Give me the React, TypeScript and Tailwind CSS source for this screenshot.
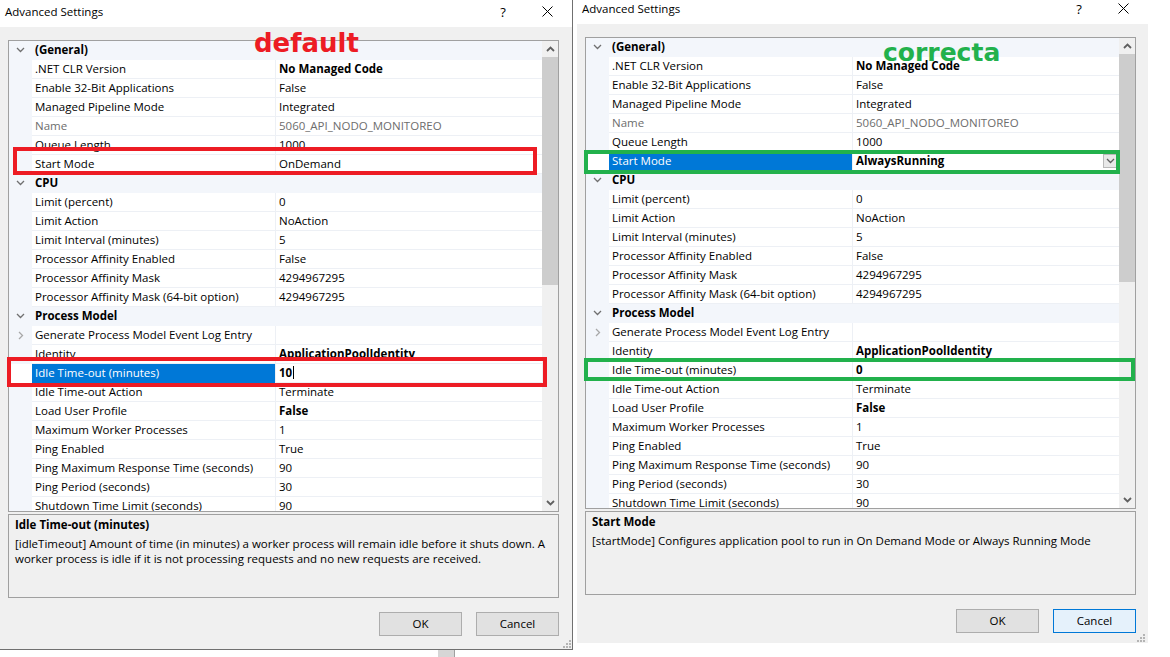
import React from 'react'

type Prop = {
  label: string
  value?: string
  cat?: boolean
  bold?: boolean
  disabled?: boolean
  expand?: boolean
  selected?: boolean
  editing?: boolean
  dropdown?: boolean
}

function buildRows(fixed: boolean): Prop[] {
  return [
    { label: '(General)', cat: true },
    { label: '.NET CLR Version', value: 'No Managed Code', bold: true },
    { label: 'Enable 32-Bit Applications', value: 'False' },
    { label: 'Managed Pipeline Mode', value: 'Integrated' },
    { label: 'Name', value: '5060_API_NODO_MONITOREO', disabled: true },
    { label: 'Queue Length', value: '1000' },
    fixed
      ? { label: 'Start Mode', value: 'AlwaysRunning', bold: true, selected: true, dropdown: true }
      : { label: 'Start Mode', value: 'OnDemand' },
    { label: 'CPU', cat: true },
    { label: 'Limit (percent)', value: '0' },
    { label: 'Limit Action', value: 'NoAction' },
    { label: 'Limit Interval (minutes)', value: '5' },
    { label: 'Processor Affinity Enabled', value: 'False' },
    { label: 'Processor Affinity Mask', value: '4294967295' },
    { label: 'Processor Affinity Mask (64-bit option)', value: '4294967295' },
    { label: 'Process Model', cat: true },
    { label: 'Generate Process Model Event Log Entry', expand: true },
    { label: 'Identity', value: 'ApplicationPoolIdentity', bold: true },
    fixed
      ? { label: 'Idle Time-out (minutes)', value: '0', bold: true }
      : { label: 'Idle Time-out (minutes)', value: '10', bold: true, selected: true, editing: true },
    { label: 'Idle Time-out Action', value: 'Terminate' },
    { label: 'Load User Profile', value: 'False', bold: true },
    { label: 'Maximum Worker Processes', value: '1' },
    { label: 'Ping Enabled', value: 'True' },
    { label: 'Ping Maximum Response Time (seconds)', value: '90' },
    { label: 'Ping Period (seconds)', value: '30' },
    { label: 'Shutdown Time Limit (seconds)', value: '90' },
    { label: 'Startup Time Limit (seconds)', value: '90' },
  ]
}

const ChevronDown = ({ color = '#707070' }: { color?: string }) => (
  <svg width="9" height="6" viewBox="0 0 9 6">
    <path d="M1 1 L4.5 4.5 L8 1" stroke={color} strokeWidth="1.3" fill="none" />
  </svg>
)

const ChevronRight = () => (
  <svg width="6" height="9" viewBox="0 0 6 9">
    <path d="M1 1 L4.5 4.5 L1 8" stroke="#a8a8a8" strokeWidth="1.3" fill="none" />
  </svg>
)

function GridRow({ r }: { r: Prop }) {
  if (r.cat) {
    return (
      <div className="flex h-[19px] shrink-0 items-start bg-[#f3f6fb]">
        <div className="flex h-[18px] w-[23px] shrink-0 items-center justify-center">
          <ChevronDown />
        </div>
        <div className="pl-[3px] font-bold leading-[17px] text-black">{r.label}</div>
      </div>
    )
  }
  return (
    <div className="flex h-[19px] shrink-0">
      <div
        className={`flex w-[23px] shrink-0 items-center justify-center ${
          r.selected ? 'bg-white' : 'bg-[#f3f6fb]'
        }`}
      >
        {r.expand && <ChevronRight />}
      </div>
      <div
        className={`w-[243px] shrink-0 overflow-hidden whitespace-nowrap pl-[3px] leading-[17px] ${
          r.selected
            ? 'bg-[#0078d7] text-white'
            : r.disabled
            ? 'border-b border-[#edf0f5] text-[#6d6d6d]'
            : 'border-b border-[#edf0f5] text-black'
        }`}
      >
        {r.label}
      </div>
      <div className="w-[1px] shrink-0 bg-[#edf0f5]" />
      <div className="flex min-w-0 flex-1 items-start border-b border-[#edf0f5] pl-[3px]">
        <span
          className={`whitespace-nowrap leading-[17px] ${r.bold ? 'font-bold' : ''} ${
            r.disabled ? 'text-[#6d6d6d]' : 'text-black'
          }`}
        >
          {r.value}
        </span>
        {r.editing && <span className="ml-[1px] mt-[2px] h-[13px] w-[1px] bg-black" />}
        {r.dropdown && (
          <div className="ml-auto mr-[2px] mt-[2px] flex h-[14px] w-[14px] items-center justify-center border border-[#b9b9b9] bg-[#e8e8e8]">
            <ChevronDown color="#606060" />
          </div>
        )}
      </div>
    </div>
  )
}

function ScrollBar() {
  return (
    <div className="flex w-[16px] shrink-0 flex-col bg-[#f0f0f0]">
      <div className="flex h-[16px] shrink-0 items-center justify-center">
        <svg width="9" height="6" viewBox="0 0 9 6">
          <path d="M1 5 L4.5 1.5 L8 5" stroke="#606060" strokeWidth="1.8" fill="none" />
        </svg>
      </div>
      <div className="h-[228px] shrink-0 bg-[#cdcdcd]" />
      <div className="flex-1" />
      <div className="flex h-[16px] shrink-0 items-center justify-center">
        <svg width="9" height="6" viewBox="0 0 9 6">
          <path d="M1 1 L4.5 4.5 L8 1" stroke="#606060" strokeWidth="1.8" fill="none" />
        </svg>
      </div>
    </div>
  )
}

const Grip = () => (
  <svg width="9" height="9" viewBox="0 0 9 9">
    {[
      [7, 1],
      [4, 4],
      [7, 4],
      [1, 7],
      [4, 7],
      [7, 7],
    ].map(([x, y]) => (
      <rect key={`${x}-${y}`} x={x} y={y} width="2" height="2" fill="#b4b4b4" />
    ))}
  </svg>
)

interface DialogProps {
  fixed: boolean
}

function Dialog({ fixed }: DialogProps) {
  const rows = buildRows(fixed)
  const desc = fixed
    ? {
        title: 'Start Mode',
        lines: ['[startMode] Configures application pool to run in On Demand Mode or Always Running Mode'],
      }
    : {
        title: 'Idle Time-out (minutes)',
        lines: [
          '[idleTimeout] Amount of time (in minutes) a worker process will remain idle before it shuts down. A',
          'worker process is idle if it is not processing requests and no new requests are received.',
        ],
      }

  return (
    <div
      className={`relative flex shrink-0 flex-col bg-[#f0f0f0] ${
        fixed ? 'h-[643px] w-[571px]' : 'h-[650px] w-[573px] border-b border-r border-[#707070]'
      }`}
    >
      {/* title bar */}
      <div
        className={`flex shrink-0 items-start bg-white ${
          fixed ? 'h-[24px] pt-[1px]' : 'h-[27px] pt-[4px]'
        }`}
      >
        <span className="pl-[5px] text-[11.5px] leading-[16px] text-black">Advanced Settings</span>
        <span className="ml-auto w-[12px] text-center text-[13px] leading-[16px] text-black">?</span>
        <svg className="ml-[33px] mr-[19px] mt-[2px]" width="11" height="11" viewBox="0 0 11 11">
          <path d="M0.5 0.5 L10.5 10.5 M10.5 0.5 L0.5 10.5" stroke="#000" strokeWidth="1" />
        </svg>
      </div>

      {/* property grid */}
      <div className="ml-[8px] mt-[13px] flex h-[472px] w-[551px] shrink-0 border border-[#a0a0a0] bg-white">
        <div className="flex w-[533px] shrink-0 flex-col overflow-hidden">
          {rows.map((r, i) => (
            <GridRow key={i} r={r} />
          ))}
        </div>
        <ScrollBar />
      </div>

      {/* description */}
      <div className="ml-[8px] mt-[2px] h-[84px] w-[551px] shrink-0 border border-[#a0a0a0] bg-[#f0f0f0] pl-[6px] pt-[2px] text-black">
        <div className="font-bold leading-[15px]">{desc.title}</div>
        <div className="mt-[4px]">
          {desc.lines.map((l) => (
            <div key={l} className="whitespace-nowrap leading-[15px]">
              {l}
            </div>
          ))}
        </div>
      </div>

      {/* buttons */}
      <div className="mt-[14px] flex w-[559px] shrink-0 justify-end gap-[14px]">
        <button className="h-[24px] w-[83px] border border-[#adadad] bg-[#e1e1e1] text-[11.5px] text-black">
          OK
        </button>
        <button
          className={`h-[24px] w-[83px] border text-[11.5px] text-black ${
            fixed ? 'border-[#0078d7] bg-[#e5f1fb]' : 'border-[#adadad] bg-[#e1e1e1]'
          }`}
        >
          Cancel
        </button>
      </div>

      <div className={`flex flex-1 items-end justify-end pb-[1px] ${fixed ? 'pr-[3px]' : 'pr-[1px]'}`}>
        <Grip />
      </div>

      {/* annotations drawn over the screenshot */}
      {fixed ? (
        <>
          <span className="absolute left-[306px] top-[40px] font-['DejaVu_Sans',sans-serif] text-[25px] font-bold leading-[26px] text-[#22b14c]">
            correcta
          </span>
          <div className="absolute left-[7px] top-[150px] h-[24px] w-[536px] border-[4px] border-[#22b14c]" />
          <div className="absolute left-[7px] top-[358px] h-[23px] w-[551px] border-[4px] border-[#22b14c]" />
        </>
      ) : (
        <>
          <span className="absolute left-[254px] top-[30px] font-['DejaVu_Sans',sans-serif] text-[26px] font-bold leading-[26px] text-[#ed1c24]">
            default
          </span>
          <div className="absolute left-[13px] top-[147px] h-[28px] w-[524px] border-[4px] border-[#ed1c24]" />
          <div className="absolute left-[7px] top-[357px] h-[30px] w-[540px] border-[4px] border-[#ed1c24]" />
        </>
      )}
    </div>
  )
}

export default function App() {
  return (
    <div className="flex h-[657px] w-[1170px] overflow-hidden bg-white font-['Open_Sans','Segoe_UI',sans-serif] text-[11.5px]">
      <div className="flex shrink-0 flex-col">
        <Dialog fixed={false} />
        <div className="ml-[438px] h-[7px] w-[17px] border-r border-[#a0a0a0] bg-[#d6d6d6]" />
      </div>
      <div className="w-[4px] shrink-0 bg-white" />
      <Dialog fixed />
    </div>
  )
}
